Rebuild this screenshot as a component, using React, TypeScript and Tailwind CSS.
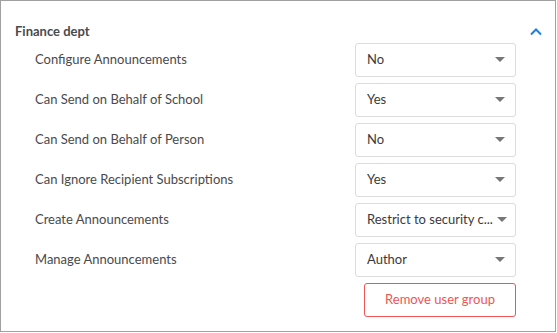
const rows = [
  { label: "Configure Announcements", value: "No" },
  { label: "Can Send on Behalf of School", value: "Yes" },
  { label: "Can Send on Behalf of Person", value: "No" },
  { label: "Can Ignore Recipient Subscriptions", value: "Yes" },
  { label: "Create Announcements", value: "Restrict to security c..." },
  { label: "Manage Announcements", value: "Author" },
];

function SelectBox({ value }: { value: string }) {
  return (
    <div className="flex h-[34px] w-[161px] items-center justify-between rounded-[3px] border border-[#dcdcdc] bg-white pl-[11px] pr-[10px] text-[13px] text-[#3a3a3a]">
      <span className="whitespace-nowrap">{value}</span>
      <span className="ml-1 h-0 w-0 shrink-0 border-x-[5px] border-t-[5px] border-x-transparent border-t-[#777]" />
    </div>
  );
}

export default function App() {
  return (
    <div
      className="h-[332px] w-[556px] border border-[#a0a0a0] bg-white"
      style={{ fontFamily: "Lato, 'Noto Sans', sans-serif" }}
    >
      <div className="flex items-center justify-between pl-[14px] pr-[12px] pt-[21px]">
        <h3 className="text-[13px] font-bold text-[#4a4a4a]">Finance dept</h3>
        <svg width="14" height="10" viewBox="0 0 14 10">
          <path d="M2 7.5 L7 2.5 L12 7.5" fill="none" stroke="#1e7fe0" strokeWidth="2" />
        </svg>
      </div>
      <div className="mt-[1px] flex flex-col gap-[6px] pl-[34px] pr-[39px]">
        {rows.map((row) => (
          <div key={row.label} className="flex items-center justify-between">
            <span className="text-[13px] text-[#4a4a4a]">{row.label}</span>
            <SelectBox value={row.value} />
          </div>
        ))}
        <div className="flex justify-end">
          <button
            type="button"
            className="h-[34px] w-[152px] rounded-[3px] border border-[#f05555] text-[13px] text-[#f05555]"
          >
            Remove user group
          </button>
        </div>
      </div>
    </div>
  );
}
